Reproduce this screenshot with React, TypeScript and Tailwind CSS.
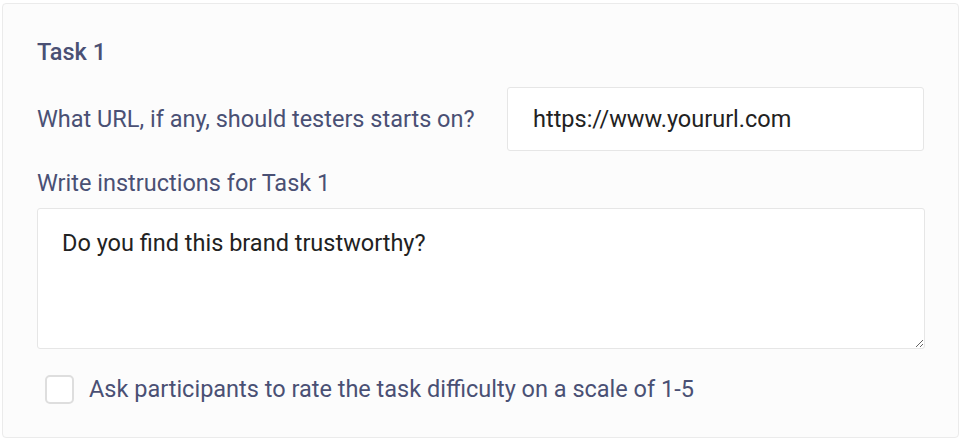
import React from 'react';

export default function App() {
  return (
    <div className="min-h-screen bg-white pl-[2px] pt-[3px] font-['Roboto',sans-serif]">
      <div className="w-[957px] h-[435px] rounded-[4px] border border-[#ebebeb] bg-[#fcfcfc] pl-[34px] pr-[34px] pt-[32px]">
        <h2 className="text-[23.5px] leading-[32px] font-medium text-[#4a5074]">Task 1</h2>

        <div className="mt-[19px] flex items-center justify-between">
          <label className="text-[23.5px] leading-[32px] text-[#4a5074]">
            What URL, if any, should testers starts on?
          </label>
          <input
            type="text"
            defaultValue="https://www.yoururl.com"
            className="h-[64px] w-[417px] rounded-[3px] border border-[#e6e6e6] bg-white px-[25px] text-[23.5px] text-[#222222] outline-none"
          />
        </div>

        <div className="mt-[16px] text-[23.5px] leading-[32px] text-[#4a5074]">Write instructions for Task 1</div>

        <textarea
          defaultValue="Do you find this brand trustworthy?"
          className="mt-[9px] block h-[141px] w-[888px] rounded-[3px] border border-[#e6e6e6] bg-white px-[24px] pt-[18px] text-[23.5px] leading-[32px] text-[#222222] outline-none"
        />

        <label className="mt-[24px] ml-[8px] flex items-center gap-[15px]">
          <span className="block h-[29px] w-[29px] rounded-[5px] border-2 border-[#dedede] bg-white" />
          <span className="text-[23.5px] leading-[32px] text-[#4a5074]">
            Ask participants to rate the task difficulty on a scale of 1-5
          </span>
        </label>
      </div>
    </div>
  );
}
